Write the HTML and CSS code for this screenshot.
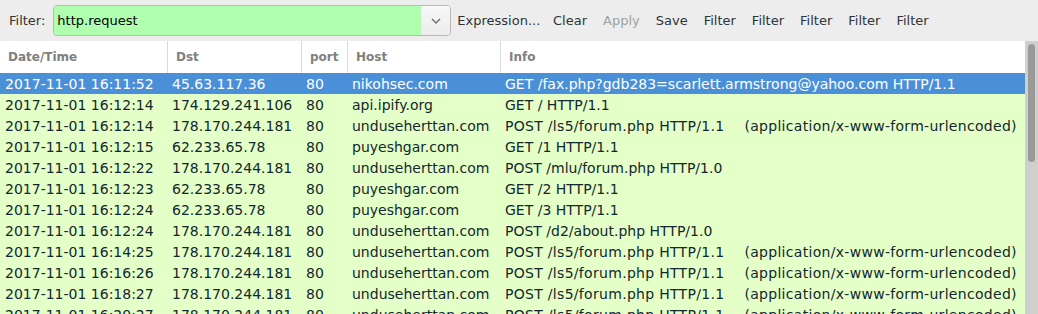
FILE: index.html
```html
<!DOCTYPE html>
<html>
<head>
<meta charset="utf-8">
<link rel="stylesheet" href="styles.css">
</head>
<body>
<div class="toolbar">
  <span class="label">Filter:</span>
  <div class="combo">
    <div class="entry">http.request</div>
    <div class="drop"><svg width="10" height="6" viewBox="0 0 10 6"><path d="M1 1 L5 5 L9 1" fill="none" stroke="#6e6e6e" stroke-width="1.4"/></svg></div>
  </div>
  <span class="btn first">Expression...</span>
  <span class="btn">Clear</span>
  <span class="btn disabled">Apply</span>
  <span class="btn">Save</span>
  <span class="btn">Filter</span>
  <span class="btn">Filter</span>
  <span class="btn">Filter</span>
  <span class="btn">Filter</span>
  <span class="btn">Filter</span>
</div>
<div class="main">
  <div class="list">
    <div class="row head">
      <div class="cell">Date/Time</div>
      <div class="cell">Dst</div>
      <div class="cell">port</div>
      <div class="cell">Host</div>
      <div class="cell">Info</div>
    </div>
    <div class="row sel">
      <div class="cell">2017-11-01 16:11:52</div><div class="cell">45.63.117.36</div><div class="cell">80</div><div class="cell">nikohsec.com</div><div class="cell">GET /fax.php?gdb283=scarlett.armstrong@yahoo.com HTTP/1.1</div>
    </div>
    <div class="row">
      <div class="cell">2017-11-01 16:12:14</div><div class="cell">174.129.241.106</div><div class="cell">80</div><div class="cell">api.ipify.org</div><div class="cell">GET / HTTP/1.1</div>
    </div>
    <div class="row">
      <div class="cell">2017-11-01 16:12:14</div><div class="cell">178.170.244.181</div><div class="cell">80</div><div class="cell">unduseherttan.com</div><div class="cell"><span class="req">POST /ls5/forum.php HTTP/1.1</span><span class="ctype">(application/x-www-form-urlencoded)</span></div>
    </div>
    <div class="row">
      <div class="cell">2017-11-01 16:12:15</div><div class="cell">62.233.65.78</div><div class="cell">80</div><div class="cell">puyeshgar.com</div><div class="cell">GET /1 HTTP/1.1</div>
    </div>
    <div class="row">
      <div class="cell">2017-11-01 16:12:22</div><div class="cell">178.170.244.181</div><div class="cell">80</div><div class="cell">unduseherttan.com</div><div class="cell">POST /mlu/forum.php HTTP/1.0</div>
    </div>
    <div class="row">
      <div class="cell">2017-11-01 16:12:23</div><div class="cell">62.233.65.78</div><div class="cell">80</div><div class="cell">puyeshgar.com</div><div class="cell">GET /2 HTTP/1.1</div>
    </div>
    <div class="row">
      <div class="cell">2017-11-01 16:12:24</div><div class="cell">62.233.65.78</div><div class="cell">80</div><div class="cell">puyeshgar.com</div><div class="cell">GET /3 HTTP/1.1</div>
    </div>
    <div class="row">
      <div class="cell">2017-11-01 16:12:24</div><div class="cell">178.170.244.181</div><div class="cell">80</div><div class="cell">unduseherttan.com</div><div class="cell">POST /d2/about.php HTTP/1.0</div>
    </div>
    <div class="row">
      <div class="cell">2017-11-01 16:14:25</div><div class="cell">178.170.244.181</div><div class="cell">80</div><div class="cell">unduseherttan.com</div><div class="cell"><span class="req">POST /ls5/forum.php HTTP/1.1</span><span class="ctype">(application/x-www-form-urlencoded)</span></div>
    </div>
    <div class="row">
      <div class="cell">2017-11-01 16:16:26</div><div class="cell">178.170.244.181</div><div class="cell">80</div><div class="cell">unduseherttan.com</div><div class="cell"><span class="req">POST /ls5/forum.php HTTP/1.1</span><span class="ctype">(application/x-www-form-urlencoded)</span></div>
    </div>
    <div class="row">
      <div class="cell">2017-11-01 16:18:27</div><div class="cell">178.170.244.181</div><div class="cell">80</div><div class="cell">unduseherttan.com</div><div class="cell"><span class="req">POST /ls5/forum.php HTTP/1.1</span><span class="ctype">(application/x-www-form-urlencoded)</span></div>
    </div>
    <div class="row">
      <div class="cell">2017-11-01 16:20:27</div><div class="cell">178.170.244.181</div><div class="cell">80</div><div class="cell">unduseherttan.com</div><div class="cell"><span class="req">POST /ls5/forum.php HTTP/1.1</span><span class="ctype">(application/x-www-form-urlencoded)</span></div>
    </div>
  </div>
  <div class="scrollbar"><div class="thumb"></div></div>
</div>
</body>
</html>
```
FILE: styles.css
```css
html, body {
  margin: 0;
  padding: 0;
  width: 1038px;
  height: 314px;
  overflow: hidden;
  font-family: "DejaVu Sans", sans-serif;
  font-size: 13px;
  background: #ffffff;
}
.toolbar {
  height: 41px;
  background: #ededed;
  display: flex;
  align-items: center;
  box-sizing: border-box;
  padding-left: 9px;
  color: #2e3436;
}
.label {
  margin-right: 8px;
}
.combo {
  display: flex;
  width: 398px;
  height: 31px;
  box-sizing: border-box;
  border: 1px solid #b9b9b6;
  border-radius: 4px;
  overflow: hidden;
}
.entry {
  flex: 1;
  background: #afffaf;
  color: #000;
  display: flex;
  align-items: center;
  padding-left: 3px;
}
.drop {
  width: 29px;
  background: linear-gradient(#f8f8f8, #ececec);
  display: flex;
  align-items: center;
  justify-content: center;
}
.btn {
  padding: 0 8px;
}
.btn.first {
  margin-left: -2px;
  padding-right: 4.7px;
}
.btn.disabled {
  color: #a0a2a0;
}
.main {
  display: flex;
  height: 273px;
}
.list {
  width: 1025px;
  overflow: hidden;
}
.row {
  display: grid;
  grid-template-columns: 167px 134px 46px 153px 1fr;
  height: 21px;
  align-items: center;
  background: #e4ffc7;
  color: #12272e;
  font-size: 14px;
}
.row .cell {
  padding-left: 5px;
  white-space: pre;
  overflow: hidden;
}
.req {
  letter-spacing: 0.3px;
}
.ctype {
  margin-left: 20px;
  letter-spacing: 0.3px;
}
.row.sel {
  background: #4a90d9;
  color: #ffffff;
}
.row.head {
  height: 32px;
  background: #ffffff;
  color: #808080;
  font-weight: bold;
  font-size: 12px;
  align-items: stretch;
}
.row.head .cell {
  padding-left: 8px;
  display: flex;
  align-items: center;
  border-left: 1px solid #dadada;
}
.row.head .cell:first-child {
  border-left: none;
}
.scrollbar {
  width: 13px;
  background: #cfcfcf;
  padding-top: 3px;
  box-sizing: border-box;
  display: flex;
  justify-content: center;
}
.thumb {
  width: 7px;
  height: 118px;
  background: #9a9a9a;
  border-radius: 4px;
}
```
